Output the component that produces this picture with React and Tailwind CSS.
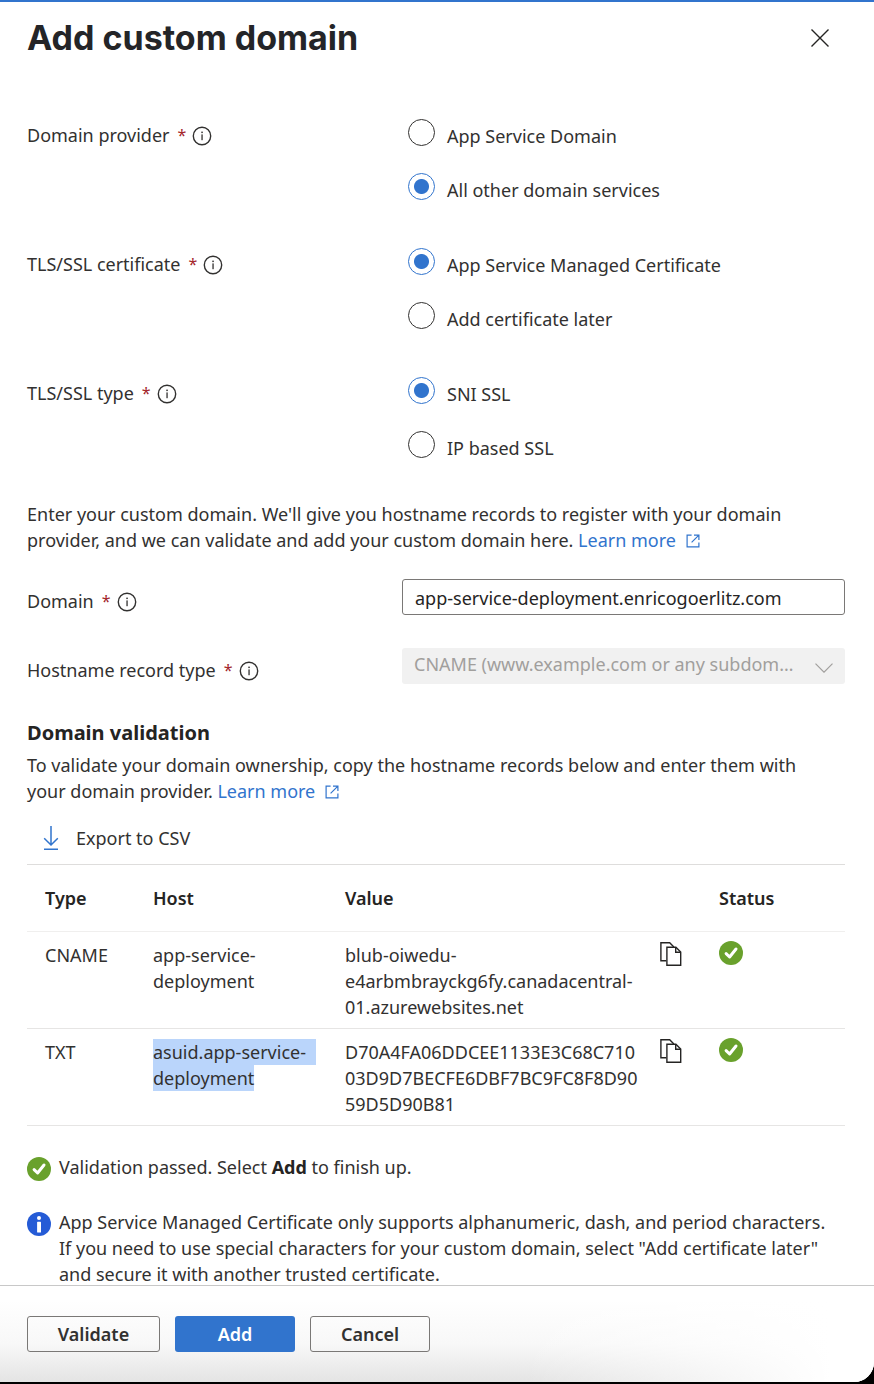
import React from "react";

function InfoOutline() {
  return (
    <svg viewBox="0 0 20 20" className="mt-0.5 size-5 shrink-0" fill="none" aria-hidden="true">
      <circle cx="10" cy="10" r="8.7" stroke="#323130" strokeWidth="1.4" />
      <rect x="9.4" y="8.4" width="1.3" height="5.8" fill="#323130" />
      <rect x="9.3" y="5.6" width="1.5" height="1.5" fill="#323130" />
    </svg>
  );
}

function CheckBadge() {
  return (
    <svg viewBox="0 0 24 24" className="size-6 shrink-0" role="img" aria-label="Passed">
      <circle cx="12" cy="12" r="12" fill="#69a12c" />
      <path d="M7.1 12.6 10.6 16 17 8" fill="none" stroke="#fff" strokeWidth="3" strokeLinecap="round" strokeLinejoin="round" />
    </svg>
  );
}

function InfoBadge() {
  return (
    <svg viewBox="0 0 24 24" className="size-6 shrink-0" role="img" aria-label="Information">
      <circle cx="12" cy="12" r="12" fill="#255bd6" />
      <circle cx="12" cy="6.1" r="2" fill="#fff" />
      <rect x="10.1" y="9.7" width="3.9" height="10.8" rx="0.6" fill="#fff" />
    </svg>
  );
}

function CopyIcon() {
  return (
    <svg viewBox="0 0 22 24" className="h-6 w-[22px]" fill="none" stroke="#252423" strokeWidth="1.4" aria-hidden="true">
      <path d="M6.3 18.8H.9V.8h8.8l4.2 4.1" />
      <path d="M6.9 5.3h9l4.8 4.8v13.1H6.9z" />
      <path d="M15.7 5.5v4.8h4.8" />
    </svg>
  );
}

function ExternalIcon() {
  return (
    <svg viewBox="0 0 14 14" className="ml-2.5 inline-block size-3.5 align-[-1px]" fill="none" stroke="#3174cd" strokeWidth="1.2" aria-hidden="true">
      <path d="M5.6 1.1H1.1v11.8h11.8V8.4" />
      <path d="M8 1.1h4.9V6M12.9 1.1 5.6 8.4" />
    </svg>
  );
}

function LearnMore() {
  return (
    <a href="#learn-more" className="whitespace-nowrap text-[#3174cd]">
      Learn more
      <ExternalIcon />
    </a>
  );
}

function FieldLabel({ children }) {
  return (
    <span className="flex items-center">
      {children}
      <span className="mr-1.5 ml-2 text-[16px] text-[#a4262c]">*</span>
      <InfoOutline />
    </span>
  );
}

function RadioGroup({ label, name, options, selected }) {
  return (
    <fieldset className="grid grid-cols-[375px_1fr]" aria-label={label}>
      <div className="pt-[3px]">
        <FieldLabel>{label}</FieldLabel>
      </div>
      <div className="flex flex-col items-start gap-[27px] pl-1.5">
        {options.map((option) => (
          <label key={option} className="flex h-[27px] gap-3">
            <input
              type="radio"
              name={name}
              defaultChecked={option === selected}
              className="size-[27px] appearance-none rounded-full border border-[#323130] bg-white checked:border-[#3174cd] checked:bg-[radial-gradient(circle,#3174cd_7px,transparent_8px)]"
            />
            <span className="pt-1">{option}</span>
          </label>
        ))}
      </div>
    </fieldset>
  );
}

const records = [
  {
    type: "CNAME",
    host: "app-service-deployment",
    value: "blub-oiwedu-e4arbmbrayckg6fy.canadacentral-01.azurewebsites.net",
  },
  {
    type: "TXT",
    host: (
      <mark className="bg-transparent text-inherit">
        <span className="block w-fit bg-[#bad5fb] pr-2.5">asuid.app-service-</span>
        <span className="block w-fit bg-[#bad5fb]">deployment</span>
      </mark>
    ),
    value: "D70A4FA06DDCEE1133E3C68C71003D9D7BECFE6DBF7BC9FC8F8D9059D5D90B81",
  },
];

export default function App() {
  return (
    <div className="h-screen bg-black pb-0.5 font-['Noto_Sans','Open_Sans',sans-serif] text-[18px] leading-[26px] text-[#323130]">
      <section className="flex h-full flex-col overflow-hidden rounded-br-[20px] border-t-2 border-[#3174cd] bg-white">
        <header className="flex shrink-0 items-center justify-between pt-[14px] pr-[45px] pl-[27px]">
          <h1 className="font-['Inter',sans-serif] text-[34px] leading-[44px] font-bold text-[#242528]">Add custom domain</h1>
          <button type="button" aria-label="Close">
            <svg viewBox="0 0 18 18" className="size-[18px]" fill="none" stroke="#252423" strokeWidth="1.4" aria-hidden="true">
              <path d="M.5.5l17 17M17.5.5l-17 17" />
            </svg>
          </button>
        </header>

        <main className="min-h-0 flex-1 overflow-y-auto pt-[59px] pr-[29px] pl-[27px] [scrollbar-width:none]">
          <div className="flex flex-col gap-12">
            <RadioGroup
              label="Domain provider"
              name="provider"
              options={["App Service Domain", "All other domain services"]}
              selected="All other domain services"
            />
            <RadioGroup
              label="TLS/SSL certificate"
              name="certificate"
              options={["App Service Managed Certificate", "Add certificate later"]}
              selected="App Service Managed Certificate"
            />
            <RadioGroup label="TLS/SSL type" name="type" options={["SNI SSL", "IP based SSL"]} selected="SNI SSL" />
          </div>

          <p className="mt-[43px] pr-4">
            Enter your custom domain. We'll give you hostname records to register with your domain provider, and we can
            validate and add your custom domain here. <LearnMore />
          </p>

          <div className="mt-[26px] grid grid-cols-[375px_1fr] items-center">
            <label htmlFor="domain" className="pt-2">
              <FieldLabel>Domain</FieldLabel>
            </label>
            <input
              id="domain"
              type="text"
              defaultValue="app-service-deployment.enricogoerlitz.com"
              className="h-9 w-full rounded-[3px] border border-[#7a7876] px-3 pt-0.5 text-[#252423]"
            />
          </div>

          <div className="mt-[33px] grid grid-cols-[375px_1fr] items-center">
            <label htmlFor="record-type" className="pt-2">
              <FieldLabel>Hostname record type</FieldLabel>
            </label>
            <div className="grid items-center">
              <select
                id="record-type"
                disabled
                className="col-start-1 row-start-1 h-9 w-full appearance-none truncate rounded-[3px] bg-[#f1f1f1] pr-11 pb-1 pl-3 text-[#a19f9d] opacity-100"
              >
                <option>CNAME (www.example.com or any subdomain)</option>
              </select>
              <svg viewBox="0 0 18 10" className="col-start-1 row-start-1 mt-1 mr-3 h-2.5 w-[18px] justify-self-end" fill="none" stroke="#a19f9d" strokeWidth="1.2" aria-hidden="true">
                <path d="M.5.6 9 9.2 17.5.6" />
              </svg>
            </div>
          </div>

          <h2 className="mt-9 text-[20px] leading-[26px] font-bold text-[#252423]">Domain validation</h2>
          <p className="mt-1.5 pr-4">
            To validate your domain ownership, copy the hostname records below and enter them with your domain provider.{" "}
            <LearnMore />
          </p>

          <button type="button" className="mt-[21px] flex items-center gap-[17px] pl-4">
            <svg viewBox="0 0 16 24" className="h-6 w-4" fill="none" stroke="#3174cd" strokeWidth="1.5" aria-hidden="true">
              <path d="M8 0v19M1.2 12.2 8 19l6.8-6.8M1 23.2h14" />
            </svg>
            Export to CSV
          </button>

          <table className="mt-[13px] w-full table-fixed border-t border-[#dedddc] text-left">
            <colgroup>
              <col className="w-[126px]" />
              <col className="w-[192px]" />
              <col className="w-[315px]" />
              <col className="w-[59px]" />
              <col />
            </colgroup>
            <thead>
              <tr className="h-[67px] border-b border-[#f0efee] text-[#252423]">
                <th className="pl-[18px] font-semibold">Type</th>
                <th className="font-semibold">Host</th>
                <th className="font-semibold">Value</th>
                <th aria-label="Copy" />
                <th className="font-semibold">Status</th>
              </tr>
            </thead>
            <tbody>
              {records.map((record) => (
                <tr key={record.type} className="border-b border-[#e6e5e4] align-top">
                  <td className="pt-2.5 pb-2 pl-[18px]">{record.type}</td>
                  <td className="pt-2.5 pr-6 pb-2">{record.host}</td>
                  <td className="pt-2.5 pr-5 pb-2 wrap-anywhere">{record.value}</td>
                  <td className="pt-2.5">
                    <button type="button" aria-label="Copy value" className="block">
                      <CopyIcon />
                    </button>
                  </td>
                  <td className="pt-[9px]">
                    <CheckBadge />
                  </td>
                </tr>
              ))}
            </tbody>
          </table>

          <div className="mt-7 flex gap-2">
            <div className="pt-[3px]">
              <CheckBadge />
            </div>
            <p>
              Validation passed. Select <strong className="text-[#252423]">Add</strong> to finish up.
            </p>
          </div>
          <div className="mt-7 flex gap-2">
            <div className="pt-[3px]">
              <InfoBadge />
            </div>
            <p className="pr-3">
              App Service Managed Certificate only supports alphanumeric, dash, and period characters. If you need to
              use special characters for your custom domain, select "Add certificate later" and secure it with another
              trusted certificate.
            </p>
          </div>
        </main>

        <footer className="flex shrink-0 gap-[15px] border-t border-[#c8c8c8] bg-[linear-gradient(to_right,transparent_60%,#fff_95%),linear-gradient(to_bottom,#fff_15%,#f8f8f8_60%,#e4e4e4_100%)] px-[27px] py-[30px] font-semibold text-[#323130]">
          <button type="button" className="h-9 w-[133px] rounded-[3px] border border-[#7a7876]">
            Validate
          </button>
          <button type="button" className="h-9 w-[120px] rounded-[3px] bg-[#3174cd] text-white">
            Add
          </button>
          <button type="button" className="h-9 w-[120px] rounded-[3px] border border-[#7a7876]">
            Cancel
          </button>
        </footer>
      </section>
    </div>
  );
}
